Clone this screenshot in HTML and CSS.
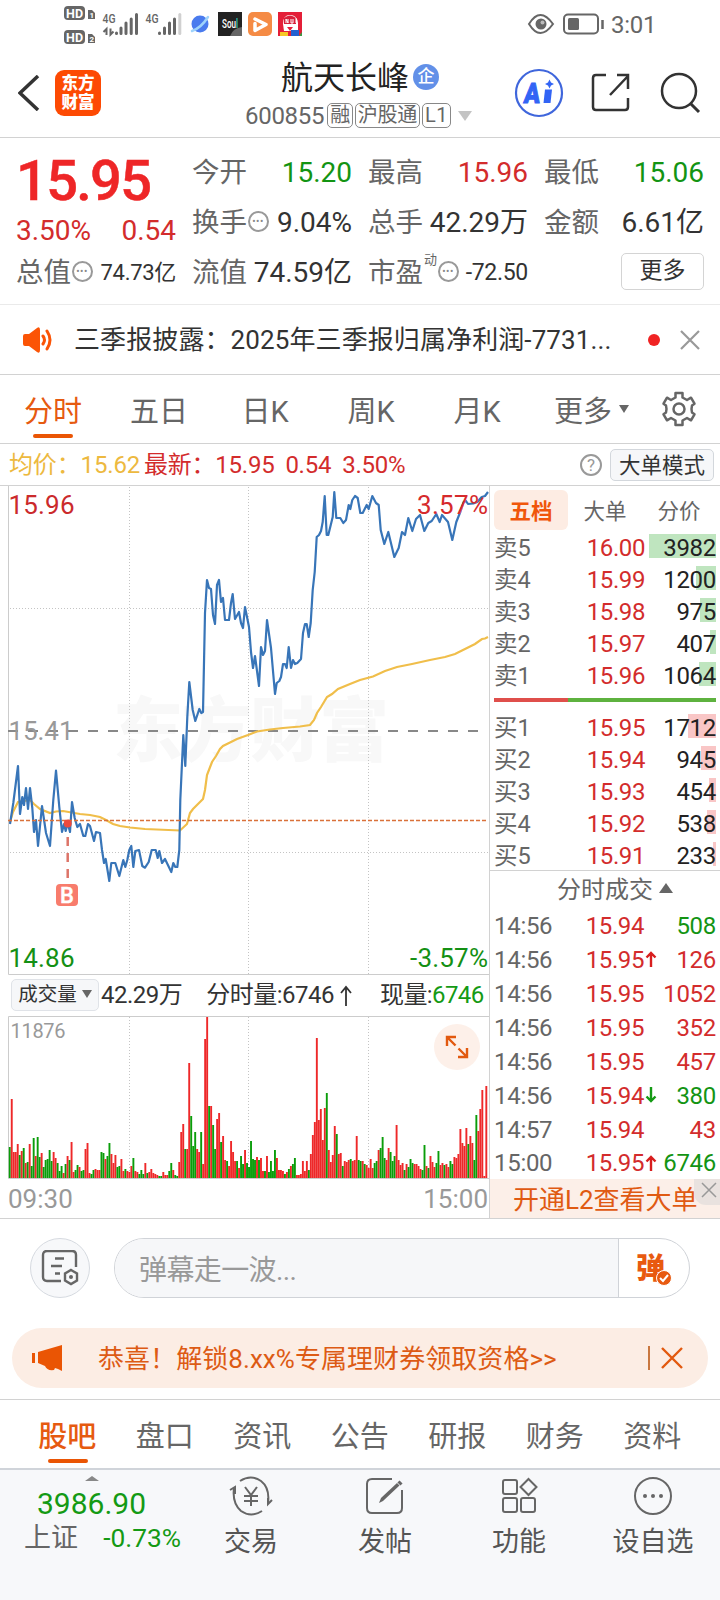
FILE: index.html
```html
<!DOCTYPE html>
<html lang="zh-CN">
<head>
    <meta charset="UTF-8">
    <meta name="viewport" content="width=device-width, initial-scale=1.0">
    <title>航天长峰 600855</title>
    <link rel="stylesheet" href="styles.css">
</head>
<body>
    <div class="status-bar">
        <svg class="status-left" width="310" height="48" viewBox="0 0 310 48">
            <g fill="#666">
                <rect x="64" y="6" width="21" height="14" rx="4"/>
                <rect x="64" y="30" width="21" height="14" rx="4"/>
                <path d="M88 10h4l3 3v6h-7zM88 34h4l3 3v6h-7z"/>
            </g>
            <g fill="#fff" font-weight="700">
                <text x="66" y="17.500" font-size="12.500" textLength="17">HD</text>
                <text x="66" y="41.500" font-size="12.500" textLength="17">HD</text>
                <text x="89.500" y="18" font-size="8">1</text>
                <text x="89.500" y="42" font-size="8">2</text>
            </g>
            <g fill="#666" font-weight="500" font-size="13">
                <text x="102.500" y="22.500" textLength="13" lengthAdjust="spacingAndGlyphs">4G</text>
                <text x="145.500" y="22.500" textLength="13" lengthAdjust="spacingAndGlyphs">4G</text>
            </g>
            <g stroke="#666" stroke-width="3" stroke-linecap="round">
                <path d="M116.500 33v.5M121 28v5.500M126 23v10.500M131.200 19v14.500M136.500 14.500v19"/>
                <path d="M159.500 33v.5M164.500 28v5.500M169.500 23v10.500M174.500 19v14.500"/>
                <path d="M179.800 14.500v19" stroke="#d0d0d0"/>
            </g>
            <path d="M106.500 35v-6l-3 3M110.500 28.500v6l3-3" fill="none" stroke="#666" stroke-width="2"/>
            <circle cx="200" cy="24" r="8.500" fill="#4a7bee"/>
            <path d="M192 31q9-3 16-14" fill="none" stroke="#9fd3fb" stroke-width="2.500" stroke-linecap="round"/>
            <rect x="218" y="12" width="24" height="24" fill="#222"/>
            <path d="M230 36q3-8 12-9v9z" fill="#666"/>
            <text x="222" y="28" font-size="12" fill="#fff" font-weight="500" textLength="16" lengthAdjust="spacingAndGlyphs">Sou<tspan fill="#34d2c0">l</tspan></text>
            <rect x="248" y="12" width="24" height="24" rx="5" fill="#f58b45"/>
            <path d="M255 19l11 5.500-11 6v-7" fill="none" stroke="#fff" stroke-width="3.500" stroke-linejoin="round" stroke-linecap="round"/>
            <rect x="278" y="12" width="24" height="24" fill="#e41f38"/>
            <path d="M283 24q0-9 7-9t8 8v8h-14z" fill="#fff"/>
            <path d="M284 18q6-5 12 0v6h-12z" fill="#d8203a"/>
            <path d="M286 23v-4l2 4v-4M291 19v4h2v-4M296 18v5" stroke="#fff" fill="none"/>
            <path d="M287 27h6l-3 4z" fill="#e41f38"/>
            <rect x="280" y="32" width="8" height="4" fill="#f6c726"/>
            <rect x="291" y="30" width="8" height="6" fill="#2360d0"/>
            <path d="M299 36l3-4v4z" fill="#3a9b45"/>
        </svg>
        <svg class="status-right" width="80" height="24" viewBox="0 0 80 24">
            <path d="M2 12q11-18 24 0q-13 18-24 0z" fill="none" stroke="#666" stroke-width="2"/>
            <circle cx="14" cy="12" r="5.500" fill="#666"/>
            <circle cx="15.500" cy="10.500" r="2" fill="#bbb"/>
            <rect x="37" y="2.500" width="34" height="19" rx="4" fill="none" stroke="#666" stroke-width="2"/>
            <rect x="41" y="6" width="11" height="12" rx="1.500" fill="#666"/>
            <path d="M75.500 8v9" stroke="#666" stroke-width="2.500"/>
        </svg>
        <span class="clock">3:01</span>
    </div>

    <div class="header">
        <svg class="back" width="22" height="36" viewBox="0 0 22 36">
            <path d="M20 1L2 18l18 17" fill="none" stroke="#333" stroke-width="3.500"/>
        </svg>
        <div class="logo">东方<br>财富</div>
        <div class="title-box">
            <div class="title">航天长峰<span class="corp">企</span></div>
            <div class="code"><span class="num">600855</span><span class="tag">融</span><span class="tag">沪股通</span><span class="tag">L1</span><i class="arrow-down"></i></div>
        </div>
        <svg class="ai" width="50" height="50" viewBox="0 0 50 50">
            <circle cx="25" cy="25" r="23" fill="#fff" stroke="#3f66dc" stroke-width="2.200"/>
            <text x="10" y="35" font-size="28" font-weight="900" fill="#3264f5" stroke="#3264f5" transform="skewX(-6) translate(3 0)" textLength="16" lengthAdjust="spacingAndGlyphs">A</text>
            <path d="M31 21.500h7l-1.500 13.500h-7z" fill="#3264f5"/>
            <path d="M35.500 11.500l1.500 3 3 1.500-3 1.500-1.500 3-1.500-3-3-1.500 3-1.500z" fill="#3264f5"/>
        </svg>
        <svg class="share" width="40" height="40" viewBox="0 0 40 40">
            <path d="M15 2H5q-3 0-3 3v29q0 3 3 3h29q3 0 3-3V25M19 22L37 3M26 2h11v14" fill="none" stroke="#333" stroke-width="2.500"/>
        </svg>
        <svg class="search" width="42" height="42" viewBox="0 0 42 42">
            <circle cx="19" cy="19" r="17" fill="none" stroke="#333" stroke-width="2.500"/>
            <path d="M30 31l9 9" stroke="#333" stroke-width="3"/>
        </svg>
    </div>

    <div class="quote">
        <div class="price">15.95</div>
        <div class="change"><span>3.50%</span><span>0.54</span></div>
        <div class="cell total-value"><b>总值<i class="dots">•••</i></b><span class="small">74.73亿</span></div>
        <div class="cell c2 r1"><b>今开</b><span class="green">15.20</span></div>
        <div class="cell c3 r1"><b>最高</b><span class="red">15.96</span></div>
        <div class="cell c4 r1"><b>最低</b><span class="green">15.06</span></div>
        <div class="cell c2 r2"><b>换手<i class="dots">•••</i></b><span>9.04%</span></div>
        <div class="cell c3 r2"><b>总手</b><span>42.29万</span></div>
        <div class="cell c4 r2"><b>金额</b><span>6.61亿</span></div>
        <div class="cell c2 r3"><b>流值</b><span>74.59亿</span></div>
        <div class="cell c3 r3"><b>市盈<sup>动</sup><i class="dots">•••</i></b><span class="small">-72.50</span></div>
        <div class="cell c4 r3 last"><button class="more-btn">更多</button></div>
    </div>

    <div class="notice">
        <svg width="32" height="26" viewBox="0 0 32 26">
            <path d="M2 9q0-2 2-2h4l8-6q3-2 3 2v20q0 4-3 2l-8-6H4q-2 0-2-2z" fill="#fb5406"/>
            <path d="M22 9q3 4 0 8M26 4q6 9 0 18" fill="none" stroke="#fb5406" stroke-width="3" stroke-linecap="round"/>
        </svg>
        <span class="notice-text">三季报披露：2025年三季报归属净利润-7731...</span>
        <i class="red-dot"></i>
        <svg width="20" height="20" viewBox="0 0 20 20"><path d="M1 1l18 18M19 1L1 19" stroke="#999" stroke-width="2.200"/></svg>
    </div>

    <div class="chart-tabs">
        <span class="active">分时</span>
        <span>五日</span>
        <span>日K</span>
        <span>周K</span>
        <span>月K</span>
        <span>更多<i class="tri"></i></span>
        <svg width="36" height="36" viewBox="0 0 36 36">
            <path d="M14.500 2h7v4.500l4.500 2.500 4-2.300 3.500 6-2.500 1.800q-1 3.500 0 7l2.500 1.800-3.500 6-4-2.300-4.500 2.500V34h-7v-4.500L10 27l-4 2.300-3.500-6L5 21.500q1-3.500 0-7l-2.500-1.800 3.500-6L10 9l4.500-2.500z" fill="none" stroke="#666" stroke-width="2.500" stroke-linejoin="round"/>
            <circle cx="18" cy="18" r="5.500" fill="none" stroke="#666" stroke-width="2.500"/>
        </svg>
    </div>

    <div class="info-row">
        <span class="avg">均价：15.62</span>
        <span class="latest">最新：15.95</span>
        <span class="latest">0.54</span>
        <span class="latest">3.50%</span>
        <i class="help">?</i>
        <button class="mode-btn">大单模式</button>
    </div>

    <div class="main">
        <div class="charts">
            <svg class="price-chart" width="489" height="489" viewBox="0 486 489 489">
                <text class="watermark" x="113" y="756" textLength="276">东方财富</text>
                <g class="grid-line">
                    <path d="M129.500 487v487M248.500 487v487M368.500 487v487M10 608.500h478M10 852.500h478"/>
                </g>
                <path d="M8.500 486v488.500H489" fill="none" stroke="#ccc"/>
                <path d="M8 731h480" stroke="#888" stroke-width="2" stroke-dasharray="10 10"/>
                <polyline class="avg-line" points="10,822 13,812 18,802 30,800 34,804 40,809 50,813 56,811.500 63,811 80,814 90,815 100,817 106,820 113,824 120,826 130,827.500 145,829 180,830.500 187,824 190,813 193,809 203,799 205,790 207,775 212,762 216,756 220,749 223,746 230,742.500 237,739 248,735 257,731.500 270,729.500 283,728 300,726.500 310,725 314,720 317,713 321,707 327,697 332,694 338,689 350,684 360,680 373,676.500 385,671 397,667 412,664 430,660 445,657 455,654 462,650.500 475,644 482,639 485,638.500 488,637"/>
                <polyline class="price-line" points="10,824 13.300,803 18,766 20,814 22.300,797 24,805 26,788 28,809 30,788 32.300,808 34,832 36,820 38,846 42,806 46,833 50,846 53.300,800 56,770.700 59.300,807 62,832 64,824 65.700,831 67.700,823 70,832 72,802 74.700,818 77.300,827 80,824 83.300,836 85.300,836 88,824 90,826 94,841 96,832 100,833 102,850 104,863 105.700,859 109.300,881 111.300,863 115.300,863 119.300,876 123.300,860 125.300,867 127.300,860 129.300,850 131.300,846 133.300,867 135.300,851 139,850 142.300,866 145,867.700 148.700,862 151.700,850 155.700,850 157.700,858 159.300,851 162,863 165,859 171.300,872 173.300,863 175.300,867 177.300,867 179.300,850 180.300,800 183.300,735 185.300,766 187.300,717 189.300,682 192.700,710 195.300,721 199.300,709 201.300,713 203,712 205,613 207,580 209,588 211,589 213,615 215,624 217,585 219,580 221,602 223,598 225,620 229,620 231,603 232.700,594 235,619 239,612 241,623 243,628 245,607 249,627 251,652 253,668 255,656 259,686 261,647 263,655 265,651 267,620 271,648 275,694 276.700,683 279.300,681 281,677 283,664 285,664 286.700,668 288.700,647 291,668 293,660 295,664 297.300,663 301,659 303,633 305,624 306.700,624 308.700,637 310.700,623 312.700,590 314.700,572 316.700,537 319,535 321,531 322.700,522 324.700,496 326.700,535 328.300,535 332.700,517 334.300,492 336.300,518 340.300,518 343.300,523 346,520 348.700,505 350.300,509 352.300,500 355,496 357.700,498 360.300,513 362.700,513 366.700,505 368.700,509 372.300,496 376,503 378.700,505 380.700,530 384.300,544 388.300,532 394.300,557 398.700,548 402,532 405,535 408.300,518 412.300,531 416,519 420,515 424.300,531 428.300,523 431.700,521 436.300,514 439.700,522 442,515 448,522 452.300,540 456.300,522 460.300,512 463.700,502 466,501 468,504 473.300,503.500 477.300,502 481.700,497 485,496 488,492"/>
                <path d="M8 820.500h480" stroke="#d9713a" stroke-width="1.500" stroke-dasharray="4 2"/>
                <circle cx="67.700" cy="823.500" r="4" fill="#ee4a3c"/>
                <path d="M67.700 837v46" stroke="#dd7468" stroke-width="2.500" stroke-dasharray="9 7"/>
                <rect x="56" y="884" width="22" height="22" rx="4" fill="#f87c6c"/>
                <text x="67" y="902.500" font-size="22" font-weight="500" fill="#fff" stroke="#fff" stroke-width=".4" text-anchor="middle">B</text>
                <g font-size="26">
                    <text x="8.500" y="514" fill="#cb2a2c" textLength="66">15.96</text>
                    <text x="488" y="514" fill="#d62a2c" text-anchor="end" textLength="71">3.57%</text>
                    <text x="8.500" y="740" fill="#999" textLength="65">15.41</text>
                    <text x="8.500" y="967" fill="#149014" textLength="66">14.86</text>
                    <text x="488" y="967" fill="#149014" text-anchor="end" textLength="78">-3.57%</text>
                </g>
            </svg>
            <div class="volume-head">
                <button class="vol-btn">成交量<i class="tri"></i></button>
                <span>42.29万</span>
                <span class="vol-min">分时量:6746<svg width="14" height="22" viewBox="0 0 14 22"><path d="M7 21V2M2 8l5-6 5 6" fill="none" stroke="#333" stroke-width="1.800"/></svg></span>
                <span class="vol-now">现量:<em>6746</em></span>
            </div>
            <div class="volume-box">
                <svg id="volume" width="489" height="163" viewBox="0 0 489 163">
                    <path class="grid-line" d="M129.500 1v161M248.500 1v161M368.500 1v161"/>
                    <path d="M489 .5H8.500V162.500H489" fill="none" stroke="#ccc"/>
                    <g id="bars"></g>
                    <text x="10.500" y="22" font-size="20" fill="#999" textLength="55">11876</text>
                </svg>
                <div class="expand">
                    <svg width="24" height="24" viewBox="0 0 24 24"><path d="M2 11V2h9M2 2l8.500 8.500M22 13v9h-9M22 22l-8.500-8.500" fill="none" stroke="#e2590f" stroke-width="2.400"/></svg>
                </div>
            </div>
            <div class="times"><span>09:30</span><span>15:00</span></div>
        </div>

        <div class="side">
            <div class="side-tabs"><span class="active">五档</span><span>大单</span><span>分价</span></div>
            <div class="levels sell" id="sell"></div>
            <div class="ratio"><i></i></div>
            <div class="levels buy" id="buy"></div>
            <div class="deal-title">分时成交<i></i></div>
            <div class="deals" id="deals"></div>
            <div class="l2">开通L2查看大单
                <div class="l2-close"><svg width="16" height="16" viewBox="0 0 16 16"><path d="M1 1l14 14M15 1L1 15" stroke="#999" stroke-width="1.500"/></svg></div>
            </div>
        </div>
    </div>

    <div class="comment">
        <div class="round-btn">
            <svg width="38" height="36" viewBox="0 0 38 36">
                <path d="M20 31H6q-4 0-4-4V5q0-4 4-4h25q4 0 4 4v12M14 8.500h9M10 16h11M14 23.500h5" fill="none" stroke="#666" stroke-width="2.400"/>
                <path d="M30 20l6 3.500v7L30 34l-6-3.500v-7z" fill="none" stroke="#666" stroke-width="2.400"/>
                <circle cx="30" cy="27" r="2" fill="#666"/>
            </svg>
        </div>
        <div class="input">
            <span class="placeholder">弹幕走一波...</span>
            <span class="danmu">弹<i><svg width="14" height="14" viewBox="0 0 14 14"><path d="M3 7l3 3 5-6" fill="none" stroke="#fff" stroke-width="2"/></svg></i></span>
        </div>
    </div>

    <div class="promo">
        <svg class="horn" width="32" height="28" viewBox="0 0 32 28">
            <path d="M1.500 9v10" stroke="#ea5504" stroke-width="3"/>
            <path d="M6 8L30 1v26l-4-2-3-1-1 2q-7 1-9-4l-7-3z" fill="#ea5504"/>
        </svg>
        <span>恭喜！解锁8.xx%专属理财券领取资格&gt;&gt;</span>
        <i class="bar"></i>
        <svg width="22" height="22" viewBox="0 0 22 22"><path d="M1 1l20 20M21 1L1 21" stroke="#e2590f" stroke-width="2.400"/></svg>
    </div>

    <div class="bottom-tabs">
        <span class="active">股吧</span>
        <span>盘口</span>
        <span>资讯</span>
        <span>公告</span>
        <span>研报</span>
        <span>财务</span>
        <span>资料</span>
    </div>

    <div class="nav">
        <div class="index">
            <i class="caret"></i>
            <div class="index-num">3986.90</div>
            <div class="index-row"><span>上证</span><em>-0.73%</em></div>
        </div>
        <div class="nav-item">
            <svg width="44" height="40" viewBox="0 0 44 40">
                <g fill="none" stroke="#666" stroke-width="2">
                    <path d="M11 5q11-7 21 0 9 7 7 22M33 35q-11 7-21 0-9-8-7-23"/>
                    <path d="M43 24l-4 4v-6M1 14l5-3v7"/>
                    <path d="M16 11l6 8 6-8M22 19v11M15 20h14M15 25h14"/>
                </g>
            </svg>
            交易
        </div>
        <div class="nav-item">
            <svg width="44" height="40" viewBox="0 0 44 40">
                <path d="M29 3H9Q4 3 4 8v24q0 5 5 5h25q5 0 5-5V14" fill="none" stroke="#666" stroke-width="2"/>
                <path d="M16 27l2-5L34 7l2.500 2.500L20 25z" fill="#666"/>
                <path d="M35.500 5.500l3 3" stroke="#666" stroke-width="3"/>
            </svg>
            发帖
        </div>
        <div class="nav-item">
            <svg width="44" height="40" viewBox="0 0 44 40">
                <g fill="none" stroke="#666" stroke-width="2">
                    <rect x="6" y="4" width="14" height="14" rx="2"/>
                    <rect x="6" y="22" width="14" height="14" rx="2"/>
                    <rect x="24" y="22" width="14" height="14" rx="2"/>
                    <path d="M31.500 3l8 8-8 8-8-8z"/>
                </g>
            </svg>
            功能
        </div>
        <div class="nav-item">
            <svg width="44" height="40" viewBox="0 0 44 40">
                <circle cx="22" cy="20" r="18" fill="none" stroke="#666" stroke-width="2"/>
                <g fill="#666"><circle cx="14" cy="20" r="2"/><circle cx="22" cy="20" r="2"/><circle cx="30" cy="20" r="2"/></g>
            </svg>
            设自选
        </div>
    </div>
    <script src="script.js"></script>
</body>
</html>
```

FILE: styles.css
```css
* {
    box-sizing: border-box;
}
body {
    margin: 0;
    width: 720px;
    height: 1600px;
    overflow: hidden;
    background: #fff;
    color: #333;
    font-family: Roboto, "Noto Sans CJK SC", sans-serif;
}
i, em, b {
    font-style: normal;
    font-weight: normal;
}
button {
    font-family: inherit;
    color: #333;
    padding: 0;
}
svg {
    display: block;
    flex: none;
}
.red {
    color: #d32c2c;
}
.green {
    color: #139413;
}

/* status bar */
.status-bar {
    height: 48px;
    display: flex;
    align-items: center;
}
.status-right {
    margin-left: 217px;
}
.clock {
    font-size: 24px;
    color: #666;
    margin-left: 4px;
    padding-top: 2px;
    letter-spacing: -0.3px;
}

/* header */
.header {
    height: 90px;
    display: flex;
    align-items: center;
    border-bottom: 1px solid #d2d2d2;
    padding: 0 17px 0 18px;
}
.logo {
    width: 46px;
    height: 46px;
    margin-left: 15px;
    border-radius: 9px;
    background: #fd4a03;
    color: #fff;
    font-size: 16.5px;
    font-weight: 900;
    line-height: 19px;
    text-align: center;
    padding-top: 4px;
}
.title-box {
    width: 413px;
    padding: 4px 0 0 144px;
}
.title {
    font-size: 32px;
    line-height: 42px;
    color: #222;
    display: flex;
    align-items: center;
    padding-left: 36px;
}
.corp {
    width: 26px;
    height: 26px;
    border-radius: 50%;
    background: #6290e8;
    color: #fff;
    font-size: 17px;
    font-weight: 500;
    line-height: 25px;
    text-align: center;
    margin-left: 4px;
    margin-top: -1px;
}
.code {
    display: flex;
    align-items: center;
    font-size: 24px;
    line-height: 34px;
    color: #666;
    letter-spacing: -0.3px;
}
.code .num {
    margin-right: 1px;
}
.tag {
    height: 25px;
    border: 1px solid #888;
    border-radius: 5px;
    font-size: 20px;
    line-height: 23px;
    padding: 0 2px;
    margin-left: 2px;
}
.tag:nth-of-type(4) {
    letter-spacing: 0.6px;
}
.arrow-down {
    border: 7px solid transparent;
    border-top: 10px solid #c4c4c4;
    border-bottom: 0;
    margin-left: 7px;
}
.share {
    margin-left: 27px;
}
.search {
    margin-left: 29px;
}

/* quote */
.quote {
    height: 167px;
    display: grid;
    grid-template-columns: 160px 160px 160px 160px;
    grid-template-rows: 50px 50px 50px;
    column-gap: 16px;
    padding: 10px 0 0 16px;
    border-bottom: 1px solid #eaeaea;
}
.price {
    grid-column: 1;
    grid-row: 1;
    font-size: 56px;
    font-weight: 500;
    line-height: 67px;
    color: #ee2627;
    letter-spacing: -1.7px;
    -webkit-text-stroke: 0.5px #ee2627;
}
.change {
    grid-column: 1;
    grid-row: 2;
    display: flex;
    justify-content: space-between;
    font-size: 28px;
    line-height: 66px;
    color: #d32c2c;
}
.cell {
    display: flex;
    justify-content: space-between;
    align-items: center;
    font-size: 28px;
    line-height: 50px;
    white-space: nowrap;
}
.cell b {
    color: #666;
    font-size: 27.5px;
    display: flex;
    align-items: center;
}
.cell sup {
    font-size: 13px;
    line-height: 13px;
    align-self: flex-start;
    margin: 5px 0 0 1px;
}
.total-value {
    grid-column: 1;
    grid-row: 3;
}
.c2 { grid-column: 2; }
.c3 { grid-column: 3; }
.c4 { grid-column: 4; }
.r1 { grid-row: 1; }
.r2 { grid-row: 2; }
.r3 { grid-row: 3; }
.cell .small {
    font-size: 23px;
    letter-spacing: -0.3px;
}
.total-value .small {
    font-size: 22px;
}
.dots {
    width: 21px;
    height: 21px;
    border: 2px solid #999;
    border-radius: 50%;
    font-size: 10px;
    line-height: 17px;
    text-align: center;
    text-indent: -1px;
    letter-spacing: 0.5px;
    color: #888;
    margin: -4px 0 0 1px;
}
.last {
    justify-content: flex-end;
}
.more-btn {
    width: 83px;
    height: 37px;
    border: 1px solid #d4d4d4;
    border-radius: 5px;
    background: #fff;
    font-size: 23px;
    line-height: 34px;
    margin-top: -4px;
}

/* notice */
.notice {
    height: 70px;
    display: flex;
    align-items: center;
    border-bottom: 1px solid #d2d2d2;
    padding: 0 20px 0 21px;
}
.notice-text {
    width: 572px;
    font-size: 26px;
    letter-spacing: 0.1px;
    margin-left: 21px;
    margin-top: -4px;
    white-space: nowrap;
}
.red-dot {
    width: 12px;
    height: 12px;
    border-radius: 50%;
    background: #f02323;
    margin: 0 20px 0 auto;
}

/* tabs over the chart */
.chart-tabs {
    height: 69px;
    display: flex;
    align-items: center;
    border-bottom: 1px solid #d2d2d2;
}
.chart-tabs span {
    width: 106px;
    height: 68px;
    font-size: 29px;
    line-height: 74px;
    color: #666;
    text-align: center;
    position: relative;
    white-space: nowrap;
}
.chart-tabs svg {
    margin-left: 25px;
}
.chart-tabs .active, .bottom-tabs .active {
    color: #e65a10;
}
.chart-tabs .active::after, .bottom-tabs .active::after {
    content: "";
    position: absolute;
    left: 33px;
    bottom: 5px;
    width: 40px;
    height: 4px;
    border-radius: 2px;
    background: #ea5504;
}
.tri {
    display: inline-block;
    border: 5px solid transparent;
    border-top: 8px solid #666;
    border-bottom: 0;
}
.chart-tabs .tri {
    position: absolute;
    left: 89px;
    top: 30px;
}

/* info row */
.info-row {
    height: 42px;
    display: flex;
    align-items: center;
    border-bottom: 1px solid #d2d2d2;
    padding: 0 6px 0 9px;
    font-size: 24px;
    line-height: 40px;
    white-space: nowrap;
}
.avg {
    color: #edb93f;
    margin-right: 4px;
    letter-spacing: -0.15px;
}
.latest {
    color: #d32c2c;
    margin-right: 11px;
    letter-spacing: -0.25px;
}
.help {
    width: 22px;
    height: 22px;
    border: 2px solid #999;
    border-radius: 50%;
    color: #999;
    font-size: 17px;
    line-height: 19px;
    text-align: center;
    margin: 0 8px 0 auto;
}
.mode-btn {
    width: 104px;
    height: 32px;
    border: 1px solid #d3d7dc;
    border-radius: 5px;
    background: #f6f7f9;
    font-size: 21.5px;
    line-height: 32px;
}

/* charts */
.main {
    height: 733px;
    display: flex;
    border-bottom: 1px solid #d2d2d2;
}
.charts {
    width: 490px;
    border-right: 1px solid #d2d2d2;
}
.grid-line {
    fill: none;
    stroke: #c4c4c4;
    stroke-dasharray: 1 2;
}
.watermark {
    font-size: 70px;
    font-weight: 900;
    fill: #f8f8f8;
}
.avg-line {
    fill: none;
    stroke: #f0be4a;
    stroke-width: 2.2;
}
.price-line {
    fill: none;
    stroke: #3875b8;
    stroke-width: 2.2;
    stroke-linejoin: round;
}
.volume-head {
    height: 41px;
    display: flex;
    align-items: center;
    padding-left: 11px;
    font-size: 24px;
    line-height: 41px;
    white-space: nowrap;
}
.vol-btn {
    width: 88px;
    height: 32px;
    border: 1px solid #e0e3e8;
    border-radius: 5px;
    background: #f6f7f9;
    font-size: 19.5px;
    line-height: 30px;
    margin: -1px 2px 0 0;
}
.vol-btn .tri {
    margin: 0 0 3px 5px;
}
.volume-head em {
    color: #149a14;
}
.volume-head span {
    letter-spacing: -0.5px;
}
.volume-head .vol-min {
    display: flex;
    align-items: center;
    margin-left: 24px;
}
.vol-min svg {
    margin-left: 5px;
}
.volume-head .vol-now {
    margin-left: 27px;
    letter-spacing: -0.6px;
}
.volume-box {
    position: relative;
}
.expand {
    position: absolute;
    left: 434px;
    top: 8px;
    width: 46px;
    height: 46px;
    border-radius: 50%;
    background: #fdf0e9;
    display: flex;
    align-items: center;
    justify-content: center;
}
.times {
    display: flex;
    justify-content: space-between;
    padding: 0 1px 0 8px;
    font-size: 26px;
    line-height: 40px;
    color: #999;
}

/* order book */
.side {
    width: 230px;
}
.side-tabs {
    display: flex;
    height: 45px;
    padding: 4px 0 1px 4px;
    font-size: 21.5px;
    line-height: 43px;
    color: #666;
}
.side-tabs span {
    width: 74px;
    text-align: center;
}
.side-tabs .active {
    background: #fdece3;
    border-radius: 6px;
    color: #f0560a;
    font-weight: 700;
}
.level {
    display: grid;
    grid-template-columns: 80px 71px 71px;
    height: 32px;
    line-height: 35px;
    font-size: 24px;
    color: #666;
    padding-left: 4px;
}
.level b, .deal b {
    color: #d32c2c;
    text-align: right;
    letter-spacing: -0.4px;
}
.level .name {
    font-size: 23.5px;
}
.level .qty {
    position: relative;
    color: #222;
    text-align: right;
    letter-spacing: -0.3px;
}
.level .qty i {
    position: absolute;
    right: 0;
    top: 3px;
    height: 24px;
    background: #bfe5bf;
    z-index: -1;
}
.buy .qty i {
    background: #f9c6c6;
}
.ratio {
    height: 4px;
    margin: 7px 4px 9px;
    background: #5eb23f;
}
.ratio i {
    display: block;
    width: 74px;
    height: 4px;
    background: #df4f4b;
}
.deal-title {
    height: 39px;
    border-top: 1px solid #d2d2d2;
    margin-top: -1px;
    padding-left: 67px;
    font-size: 24px;
    line-height: 39px;
    color: #666;
}
.deal-title i {
    display: inline-block;
    border: 7px solid transparent;
    border-bottom: 10px solid #666;
    border-top: 0;
    margin: 0 0 5px 6px;
}
.deal {
    display: grid;
    grid-template-columns: 80px 71px 14px 57px;
    height: 34px;
    line-height: 34px;
    font-size: 24px;
    letter-spacing: -0.3px;
    color: #666;
    padding-left: 4px;
}
.deal b {
    padding-right: 1px;
}
.deal svg {
    margin: 8px 0 0;
}
.deal .qty {
    display: flex;
    justify-content: flex-end;
}
.deal:last-child {
    height: 32px;
    line-height: 33px;
}
.l2 {
    position: relative;
    height: 39px;
    padding-left: 23px;
    background: #fcefe8;
    color: #e05a12;
    font-size: 26px;
    line-height: 43px;
}
.l2-close {
    position: absolute;
    right: 0;
    top: 0;
    width: 26px;
    height: 26px;
    padding: 3px 0 0 7px;
    background: #e9e2df;
    border-bottom-left-radius: 12px;
}

/* comment and promo */
.comment {
    display: flex;
    padding: 19px 30px 30px;
}
.round-btn {
    width: 60px;
    height: 60px;
    border: 1px solid #d6dae0;
    border-radius: 50%;
    background: #f7f8fa;
    display: flex;
    align-items: center;
    justify-content: center;
}
.input {
    display: flex;
    width: 576px;
    height: 60px;
    margin-left: 24px;
    border: 1px solid #d0d3d8;
    border-radius: 30px;
    overflow: hidden;
}
.placeholder {
    width: 504px;
    background: #f6f7f9;
    border-right: 1px solid #d0d3d8;
    padding-left: 24px;
    font-size: 28px;
    letter-spacing: -0.6px;
    line-height: 63px;
    color: #999;
}
.danmu {
    position: relative;
    padding-left: 17px;
    font-size: 29px;
    font-weight: 900;
    line-height: 60px;
    color: #e85a10;
}
.danmu i {
    position: absolute;
    left: 37px;
    top: 31px;
    border: 1px solid #fff;
    border-radius: 50%;
    background: #e85a10;
}
.promo {
    height: 60px;
    margin: 0 12px 11px;
    border-radius: 30px;
    background: #fcede4;
    display: flex;
    align-items: center;
    padding: 0 25px 0 20px;
    font-size: 26px;
    color: #dd5b14;
    white-space: nowrap;
}
.promo span {
    margin: -4px 0 0 34px;
    letter-spacing: 0.06px;
}
.promo .bar {
    width: 2px;
    height: 24px;
    background: #c9773f;
    margin: 0 11px 0 auto;
}

/* bottom */
.bottom-tabs {
    height: 69px;
    display: flex;
    border-top: 1px solid #d2d2d2;
    padding-left: 18.5px;
    font-size: 29px;
    line-height: 75px;
    color: #666;
}
.bottom-tabs span {
    position: relative;
    width: 97.5px;
    text-align: center;
}
.bottom-tabs .active {
    font-weight: 500;
}
.bottom-tabs .active::after {
    left: 29px;
}
.nav {
    display: flex;
    height: 132px;
    border-top: 2px solid #d0d4da;
    background: #f7f8fa;
}
.index {
    position: relative;
    width: 184px;
    padding: 17px 0 0 24px;
}
.caret {
    position: absolute;
    left: 85px;
    top: 6px;
    border: 7px solid transparent;
    border-bottom: 5px solid #888;
    border-top: 0;
}
.index-num {
    font-size: 30px;
    line-height: 34px;
    color: #149a14;
    padding-left: 13px;
}
.index-row {
    display: flex;
    justify-content: space-between;
    font-size: 27px;
    line-height: 34px;
    color: #666;
    padding-right: 3px;
}
.index-row em {
    font-size: 26.3px;
    color: #149a14;
}
.nav-item {
    width: 134px;
    padding-top: 6px;
    font-size: 27px;
    line-height: 53px;
    color: #555;
    text-align: center;
}
.nav-item svg {
    margin: 0 auto;
}
```

FILE: script.js
```js
// minute volume, one bar every 2px: height + colour (r / g)
const volume = `31g 79r 26r 26r 34r 23g 27r 30g 15r 16g 34r 12g 40g 22r 41g 21g 25r 11g 18g 19g
28g 17g 26r 20r 15g 7g 12g 5r 14g 22r 18g 36r 6r 8g 13g 11r 7g 8g 29r 35r
5r 4g 8g 9r 8r 8r 26g 25g 19r 22g 35g 24r 15r 23r 11g 12g 19r 7r 9g 7r
6r 12r 20g 7r 6r 4g 8g 4g 15r 5g 6r 9r 5r 4r 3r 2g 2g 6r 3r 3r
7g 15g 8r 3g 2g 16r 46r 54r 29g 29r 115r 62g 32g 46g 29r 26r 46g 14r 139r 161r
72g 72r 53g 29g 59r 65r 36g 42r 18r 17g 12r 37r 26r 17r 17g 10r 22g 14g 28r 15g
11g 37g 19g 18g 21r 18g 20r 7r 7g 22r 6g 17g 7g 28g 20r 8r 8r 7r 4g 6r
9g 12r 14g 20g 3r 3r 4r 17r 7r 17r 8g 24r 43r 56r 140r 58r 69r 38r 70r 85g
28r 16r 23r 52r 44g 24r 25r 12g 17r 16r 18r 19g 17r 18r 42r 18g 17g 17r 14g 13r
10r 19r 10r 15g 17g 28r 30g 41g 20g 18r 30r 26g 17g 22g 53r 18r 13r 15r 8g 14r
11g 19g 15g 14r 14r 12r 9r 8g 33g 12r 10g 22r 16r 11r 15g 27g 13r 15r 13g 14r
11r 17g 14g 21r 20r 24r 49r 35r 32r 50r 34g 42r 35r 18g 63g 47r 69r 88r 2r 92r`;

let rects = "";
volume.trim().split(/\s+/).forEach((item, i) => {
    const h = parseInt(item);
    const color = item.endsWith("r") ? "#ee2829" : "#0a9d0a";
    rects += `<rect x="${(8.8 + i * 1.994).toFixed(2)}" y="${162 - h}" width="1.900" height="${h}" fill="${color}"/>`;
});
document.getElementById("bars").innerHTML = rects;

// order book: name, price, quantity, bar width
const sell = [
    ["卖5", "16.00", 3982, 67],
    ["卖4", "15.99", 1200, 20],
    ["卖3", "15.98", 975, 16],
    ["卖2", "15.97", 407, 6],
    ["卖1", "15.96", 1064, 17]
];
const buy = [
    ["买1", "15.95", 1712, 28],
    ["买2", "15.94", 945, 15],
    ["买3", "15.93", 454, 7],
    ["买4", "15.92", 538, 9],
    ["买5", "15.91", 233, 3]
];

function showLevels(id, list) {
    document.getElementById(id).innerHTML = list.map(row => `
        <div class="level">
            <span class="name">${row[0]}</span><b>${row[1]}</b>
            <span class="qty"><i style="width:${row[3]}px"></i>${row[2]}</span>
        </div>`).join("");
}
showLevels("sell", sell);
showLevels("buy", buy);

const deals = [
    ["14:56", "15.94", "", 508, "green"],
    ["14:56", "15.95", "up", 126, "red"],
    ["14:56", "15.95", "", 1052, "red"],
    ["14:56", "15.95", "", 352, "red"],
    ["14:56", "15.95", "", 457, "red"],
    ["14:56", "15.94", "down", 380, "green"],
    ["14:57", "15.94", "", 43, "red"],
    ["15:00", "15.95", "up", 6746, "green"]
];
const arrows = {
    "": "",
    up: '<svg width="12" height="16" viewBox="0 0 12 16"><path d="M6 16V2M1.500 6.500L6 2l4.500 4.500" fill="none" stroke="#d81e1e" stroke-width="2.400"/></svg>',
    down: '<svg width="12" height="16" viewBox="0 0 12 16"><path d="M6 0v14M1.500 9.500L6 14l4.500-4.500" fill="none" stroke="#149a14" stroke-width="2.400"/></svg>'
};
document.getElementById("deals").innerHTML = deals.map(d => `
    <div class="deal">
        <span>${d[0]}</span><b>${d[1]}</b><span>${arrows[d[2]]}</span><span class="qty ${d[4]}">${d[3]}</span>
    </div>`).join("");
```
